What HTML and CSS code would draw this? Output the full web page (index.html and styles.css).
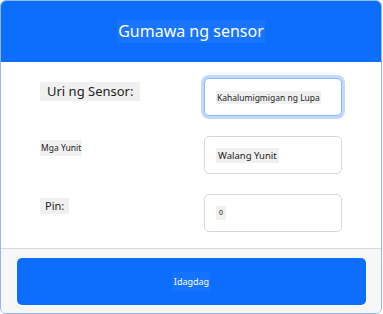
FILE: index.html
```html
<!DOCTYPE html>
<html lang="tl">
  <head>
    <meta charset="UTF-8" />
    <meta name="viewport" content="width=device-width, initial-scale=1.0" />
    <title>Gumawa ng sensor</title>
    <link rel="stylesheet" href="styles.css">
  </head>
  <body>
    <div class="sensor-card">
      <div class="card-header">
        <h1 class="title">Gumawa ng sensor</h1>
      </div>
      <div class="card-body">
        <label class="field-label label-type">Uri ng Sensor:</label>
        <div class="field-input focused"><span class="value value-type">Kahalumigmigan ng Lupa</span></div>

        <label class="field-label label-unit">Mga Yunit</label>
        <div class="field-input"><span class="value value-unit">Walang Yunit</span></div>

        <label class="field-label label-pin">Pin:</label>
        <div class="field-input"><span class="value value-pin">0</span></div>
      </div>
      <div class="card-footer">
        <button class="add-btn"><span class="btn-text">Idagdag</span></button>
      </div>
    </div>
  </body>
</html>
```

FILE: styles.css
```css
* {
  margin: 0;
  padding: 0;
  box-sizing: border-box;
}

body {
  background-color: #ffffff;
  font-family: "Noto Sans", "Open Sans", sans-serif;
  width: 383px;
  height: 314px;
}

.sensor-card {
  width: 382px;
  height: 314px;
  border: 1px solid #8fb8f6;
  border-radius: 6px;
  overflow: hidden;
  display: flex;
  flex-direction: column;
}

.card-header {
  background-color: #0d6efd;
  height: 61px;
  display: flex;
  justify-content: center;
  align-items: center;
  flex-shrink: 0;
}

.title {
  font-size: 16px;
  font-weight: 400;
  color: #ffffff;
  background-color: rgba(255, 255, 255, 0.05);
  padding: 2px 1px;
  line-height: 19px;
}

.card-body {
  background-color: #ffffff;
  display: grid;
  grid-template-columns: 1fr 138px;
  row-gap: 20px;
  padding: 16px 39px 16px 39px;
  flex: 1;
}

.field-label {
  justify-self: start;
  align-self: start;
  margin-top: 4px;
  background-color: #f0f0f0;
  color: #222222;
}

.label-type {
  font-size: 13px;
  line-height: 19px;
  padding: 0 7px;
}

.label-unit {
  font-size: 8.5px;
  line-height: 16px;
  padding: 0 1px;
}

.label-pin {
  font-size: 11px;
  line-height: 16px;
  padding: 0 5px;
}

.field-input {
  height: 38px;
  border: 1px solid #d6d9dd;
  border-radius: 5px;
  background-color: #ffffff;
  display: flex;
  align-items: center;
  padding-left: 11px;
}

.field-input.focused {
  border-color: #86b7fe;
  box-shadow: 0 0 0 3px #c2d9fd;
}

.value {
  background-color: #f0f0f0;
  color: #222222;
}

.value-type {
  font-size: 8.5px;
  line-height: 13px;
  padding: 0 1px;
}

.value-unit {
  font-size: 9.5px;
  line-height: 15px;
  padding: 0 2px;
}

.value-pin {
  font-size: 7px;
  line-height: 14px;
  padding: 0 3px;
}

.card-footer {
  background-color: #f7f7f7;
  border-top: 1px solid #d6d9dd;
  height: 67px;
  padding: 9px 15px 9px 16px;
  flex-shrink: 0;
}

.add-btn {
  width: 100%;
  height: 47px;
  border: none;
  border-radius: 5px;
  background-color: #0d6efd;
  color: #ffffff;
  font-family: "Noto Sans", "Open Sans", sans-serif;
  font-size: 9px;
  cursor: pointer;
}

.btn-text {
  background-color: rgba(255, 255, 255, 0.04);
  padding: 3px 1px;
}
```
